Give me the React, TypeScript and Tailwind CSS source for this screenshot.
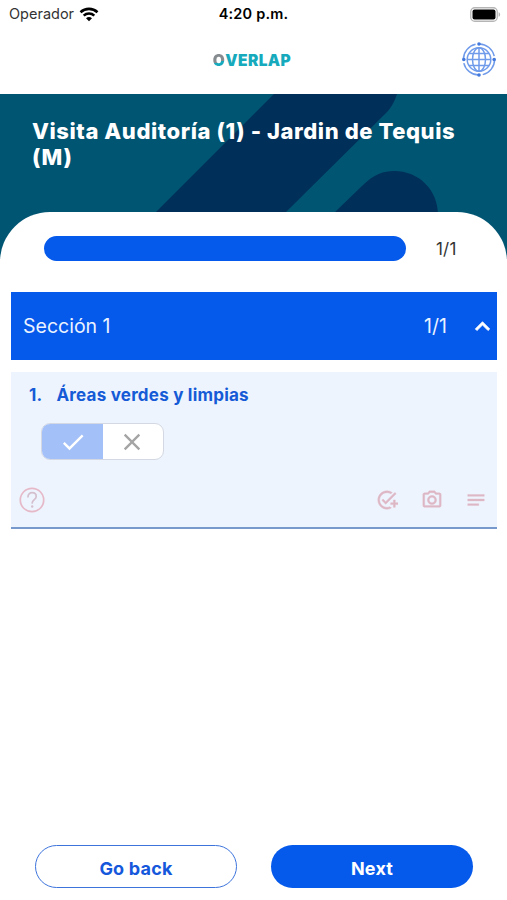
import { MdAddTask, MdCheck, MdClose, MdKeyboardArrowUp, MdNotes, MdOutlinePhotoCamera } from 'react-icons/md'

function WifiIcon() {
    return (
        <svg width="20" height="15" viewBox="0 0 20 15" fill="none" stroke="#000" strokeWidth="2.6">
            <path d="M1.5 5.2C6.3.7 13.7.7 18.5 5.2" />
            <path d="M4.7 8.6c3-2.8 7.6-2.8 10.6 0" />
            <path d="M7 11.2c1.7-1.6 4.3-1.6 6 0l-3 3z" fill="#000" stroke="none" />
        </svg>
    )
}

function BatteryIcon() {
    return (
        <svg width="31" height="15" viewBox="0 0 31 15">
            <rect x="0.75" y="0.75" width="26.5" height="13.5" rx="4" fill="#fff" stroke="#b5b5b5" strokeWidth="1.3" />
            <rect x="2.5" y="2.5" width="23" height="10" rx="2" fill="#000" />
            <path d="M28.6 5.2c2 .6 2 4 0 4.6z" fill="#b5b5b5" />
        </svg>
    )
}

function GlobeIcon() {
    return (
        <svg width="34" height="35" viewBox="0 0 34 35" fill="none" stroke="#6f9bea" strokeWidth="1.5">
            {/* outer ring is broken just before each of the four nodes */}
            <circle cx="17" cy="17.5" r="15.6" strokeDasharray="20.5 4.004" />
            <circle cx="17" cy="17.5" r="11.8" />
            <ellipse cx="17" cy="17.5" rx="6.5" ry="11.8" />
            <path d="M17 5.7v23.6M5.2 17.5h23.6M7 11.5h20M7 23.5h20" />
            <g fill="#4379dc" stroke="none">
                <circle cx="17" cy="2" r="1.8" />
                <circle cx="17" cy="33" r="1.8" />
                <circle cx="1.8" cy="17.5" r="1.8" />
                <circle cx="32.2" cy="17.5" r="1.8" />
            </g>
        </svg>
    )
}

function HelpIcon() {
    return (
        <svg width="26" height="26" viewBox="0 0 26 26" fill="none" stroke="#e5b9c8" strokeWidth="1.7" strokeLinecap="round">
            <circle cx="13" cy="13" r="11.7" />
            <path d="M9 9.8c0-2.5 1.7-4.1 4.1-4.1s4.1 1.5 4.1 3.7c0 3-4 3.3-4 6.5" stroke="#d3bfcd" />
            <circle cx="13.2" cy="19.5" r="1.2" fill="#d3bfcd" stroke="none" />
        </svg>
    )
}

function Logo() {
    return (
        <span className="flex translate-x-[4px] text-[15.5px] leading-[20px] font-black tracking-[0.4px] text-[#17aabd]">
            <span className="bg-[linear-gradient(165deg,#858b8f_54%,#17aabd_54%)] bg-clip-text text-transparent">O</span>
            <span>VERLAP</span>
        </span>
    )
}

function BannerArt() {
    return (
        <svg className="absolute inset-0" width="507" height="170" viewBox="0 0 507 170" fill="#002f59">
            <path d="M274 0L156 118v52h72l58-52L387 18Q393 12 397 0z" />
            <path d="M335 118L362 92C374 80 384 77 394 77c25 0 44 19 44 44v49H335z" />
        </svg>
    )
}

export default function App() {
    return (
        <div className="flex h-[900px] w-[507px] flex-col overflow-hidden bg-white font-['Inter',sans-serif]">
            <div className="grid h-7 shrink-0 grid-cols-3 items-center pl-[9px] pr-[6px]">
                <div className="flex items-center gap-[5px] text-[14.5px] text-[#333]">
                    <span>Operador</span>
                    <WifiIcon />
                </div>
                <div className="-ml-[3px] text-center text-[14.5px] font-semibold tracking-[0.2px] text-black">4:20 p.m.</div>
                <div className="flex justify-end">
                    <BatteryIcon />
                </div>
            </div>

            <header className="grid h-[66px] shrink-0 grid-cols-[1fr_auto_1fr] items-center pr-[11px]">
                <span />
                <Logo />
                <span className="flex -translate-y-[2px] justify-end">
                    <GlobeIcon />
                </span>
            </header>

            <div className="relative h-[165px] shrink-0 bg-[#005573]">
                <BannerArt />
                <h1 className="relative px-8 pt-6 text-[22px] leading-[26px] font-extrabold tracking-[0.58px] text-white">
                    Visita Auditoría (1) - Jardin de Tequis (M)
                </h1>
            </div>

            <main className="relative -mt-[47px] flex flex-1 flex-col rounded-t-[50px] bg-white">
                <div className="flex items-start pt-6 pl-[44px]">
                    <div className="h-[25px] w-[362px] rounded-full bg-[#0559eb]" />
                    <span className="ml-[30px] pt-px text-[17px] leading-[25px] tracking-[0.2px] text-[#333]">1/1</span>
                </div>

                <section className="mt-[30px] mr-[10px] ml-[11px]">
                    <div className="flex h-[68px] items-center bg-[#0559eb] pl-3 text-[19.5px] text-[#eaf2ff]">
                        <span className="flex-1 pt-px">Sección 1</span>
                        <span className="pt-px">1/1</span>
                        <MdKeyboardArrowUp className="ml-[21px] size-[29px] stroke-[0.6] text-white [&>path[fill=none]]:stroke-none" />
                    </div>

                    <div className="mt-3 h-[157px] border-b-2 border-[#7799cc] bg-[#eef4fd]">
                        <div className="flex gap-[14px] pt-[11px] pl-[18px] text-[17px] leading-[24px] font-bold tracking-[0.22px] text-[#155ad6]">
                            <span>1.</span>
                            <span>Áreas verdes y limpias</span>
                        </div>
                        <div className="mt-4 ml-[30px] flex h-[37px] w-[123px] overflow-hidden rounded-[9px] border border-[#d3d8e2] bg-white">
                            <button className="flex w-[61px] items-center justify-center bg-[#a4c0f8] text-white">
                                <MdCheck size={28} />
                            </button>
                            <button className="flex flex-1 items-center justify-center pr-[2px] text-[#a5a5a5]">
                                <MdClose size={28} />
                            </button>
                        </div>
                        <div className="mt-[27px] flex items-center pr-[10px] pl-2 text-[#deb7c5]">
                            <HelpIcon />
                            <div className="ml-auto flex items-center gap-[22px] [&_path[fill=none]]:stroke-none">
                                <MdAddTask className="size-[22px] -translate-x-[1px] stroke-[0.5]" />
                                <MdOutlinePhotoCamera className="size-[22px] stroke-[0.4]" />
                                <MdNotes className="size-[22px] stroke-[0.4]" />
                            </div>
                        </div>
                    </div>
                </section>

                <footer className="mt-auto flex gap-[34px] pb-[12px] pl-[35px] text-[18px] font-bold tracking-[0.2px]">
                    <button className="h-[43px] w-[202px] rounded-full border border-[#3d74dc] pt-[3px] text-[#1558dc]">Go back</button>
                    <button className="h-[43px] w-[202px] rounded-full bg-[#0559eb] pt-[3px] text-white">Next</button>
                </footer>
            </main>
        </div>
    )
}
